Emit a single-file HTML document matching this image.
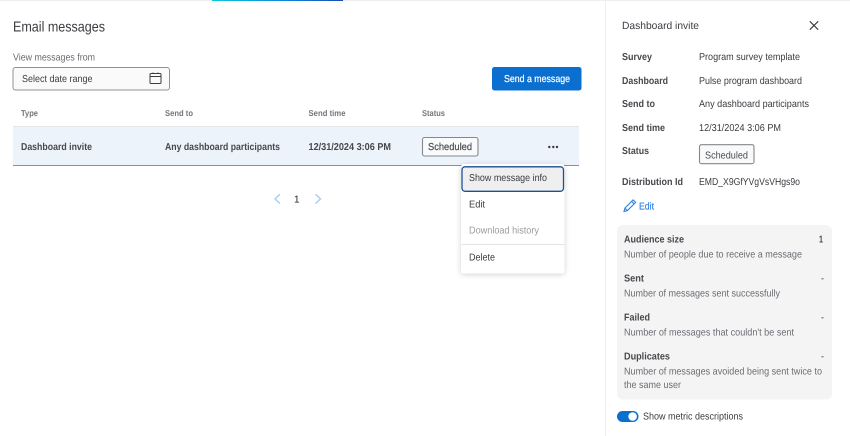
<!DOCTYPE html>
<html><head><meta charset="utf-8"><style>
html,body{margin:0;padding:0;background:#fff;width:850px;height:436px;overflow:hidden}
svg{display:block;filter:blur(.3px)}
text{font-family:"Liberation Sans",sans-serif;font-size:10px;fill:#3a3c40}
.b{font-weight:700;fill:#46484c}
.s{font-size:10px}
.d{fill:#6a6d73}
.h{fill:#74777c;font-weight:700;font-size:8.5px}
</style></head><body>
<svg width="850" height="436" viewBox="0 0 850 436" xmlns="http://www.w3.org/2000/svg" text-rendering="geometricPrecision">
<defs>
<linearGradient id="g" x1="0" x2="1" y1="0" y2="0"><stop offset="0" stop-color="#10c8d8"/><stop offset=".6" stop-color="#0b7fd8"/><stop offset="1" stop-color="#1a4bb0"/></linearGradient>
<filter id="sh" x="-20%" y="-20%" width="140%" height="140%"><feDropShadow dx="0" dy="1" stdDeviation="3" flood-color="#000" flood-opacity=".18"/></filter>
</defs>
<rect x="0" y="0" width="850" height="1" fill="#eceef0"/>
<rect x="212" y="0" width="131" height="1" fill="url(#g)"/>
<rect x="605" y="0" width="1" height="436" fill="#eeeeee"/>

<text x="13" y="31.5" style="font-size:14.5px" textLength="92" lengthAdjust="spacingAndGlyphs">Email messages</text>
<text x="13" y="60.5" class="s d" textLength="82" lengthAdjust="spacingAndGlyphs">View messages from</text>
<rect x="13" y="67.5" width="156.5" height="22.5" rx="2.5" fill="#fafafa" stroke="#8f9196"/>
<text x="22" y="81.8" class="s" textLength="70.5" lengthAdjust="spacingAndGlyphs">Select date range</text>
<g fill="none" stroke="#3a3c40" stroke-width="1"><rect x="150" y="73.5" width="11" height="10" rx="1"/><path d="M150 76.5h11M153 72.5v1M158 72.5v1"/></g>

<rect x="492" y="67" width="89.5" height="23.5" rx="2.5" fill="#0b6fd0"/>
<text x="504" y="81.8" class="s" style="fill:#fff" textLength="66" lengthAdjust="spacingAndGlyphs" stroke="#fff" stroke-width=".2">Send a message</text>

<text x="21" y="116" class="h" textLength="17" lengthAdjust="spacingAndGlyphs">Type</text>
<text x="165" y="116" class="h" textLength="28" lengthAdjust="spacingAndGlyphs">Send to</text>
<text x="308.5" y="116" class="h" textLength="37" lengthAdjust="spacingAndGlyphs">Send time</text>
<text x="422" y="116" class="h" textLength="23" lengthAdjust="spacingAndGlyphs">Status</text>

<rect x="13" y="127" width="566" height="38" fill="#edf3fb"/>
<rect x="13" y="126" width="566" height="1" fill="#e4e6e8"/>
<rect x="13" y="165" width="566" height="1" fill="#5d9bdc"/>
<text x="21" y="149.8" class="b s" textLength="71" lengthAdjust="spacingAndGlyphs">Dashboard invite</text>
<text x="165" y="149.8" class="b s" textLength="115" lengthAdjust="spacingAndGlyphs">Any dashboard participants</text>
<text x="308.5" y="149.8" class="b s" textLength="82.5" lengthAdjust="spacingAndGlyphs">12/31/2024 3:06 PM</text>
<rect x="422.5" y="137.5" width="55.5" height="18.5" rx="2" fill="#f9fafb" stroke="#85878c" stroke-width="1.1"/>
<text x="428" y="149.8" class="s" style="fill:#4a4c50" stroke="#4a4c50" stroke-width=".2" textLength="44" lengthAdjust="spacingAndGlyphs">Scheduled</text>
<g fill="#3a3c40"><circle cx="549.3" cy="147" r="1.2"/><circle cx="553.3" cy="147" r="1.2"/><circle cx="557" cy="147" r="1.2"/></g>

<path d="M280 194.2l-5 4.7 5 4.7M315.5 194.2l5 4.7-5 4.7" fill="none" stroke="#a9cbf0" stroke-width="1.4"/>
<text x="294" y="202.5" class="s" style="fill:#222" textLength="5.5" lengthAdjust="spacingAndGlyphs">1</text>

<rect x="461" y="164" width="103.5" height="109.5" rx="3" fill="#fff" filter="url(#sh)"/>
<rect x="462" y="166.8" width="101.5" height="24.5" rx="3" fill="#efefef" stroke="#1d4f91" stroke-width="1.3"/>
<text x="469" y="181" class="s" textLength="78" lengthAdjust="spacingAndGlyphs">Show message info</text>
<text x="469" y="207.3" class="s" textLength="16" lengthAdjust="spacingAndGlyphs">Edit</text>
<text x="469" y="233.3" class="s" style="fill:#9a9ca0" textLength="70" lengthAdjust="spacingAndGlyphs">Download history</text>
<rect x="461" y="244" width="103.5" height="1" fill="#e3e3e3"/>
<text x="469" y="260.3" class="s" textLength="26" lengthAdjust="spacingAndGlyphs">Delete</text>

<text x="622" y="29" style="font-size:10.5px" textLength="77" lengthAdjust="spacingAndGlyphs">Dashboard invite</text>
<path d="M809.8 21.3l8.4 8.4M818.2 21.3l-8.4 8.4" stroke="#3a3c40" stroke-width="1.1" fill="none"/>

<text x="622" y="60" class="b s" textLength="30" lengthAdjust="spacingAndGlyphs">Survey</text>
<text x="699" y="60" class="s" textLength="101" lengthAdjust="spacingAndGlyphs">Program survey template</text>
<text x="622" y="84" class="b s" textLength="46" lengthAdjust="spacingAndGlyphs">Dashboard</text>
<text x="699" y="84" class="s" textLength="103" lengthAdjust="spacingAndGlyphs">Pulse program dashboard</text>
<text x="622" y="107" class="b s" textLength="33" lengthAdjust="spacingAndGlyphs">Send to</text>
<text x="699" y="107" class="s" textLength="110" lengthAdjust="spacingAndGlyphs">Any dashboard participants</text>
<text x="622" y="131" class="b s" textLength="43" lengthAdjust="spacingAndGlyphs">Send time</text>
<text x="699" y="131" class="s" textLength="82" lengthAdjust="spacingAndGlyphs">12/31/2024 3:06 PM</text>
<text x="622" y="154" class="b s" textLength="27" lengthAdjust="spacingAndGlyphs">Status</text>
<rect x="699.5" y="144.7" width="54.5" height="19" rx="2" fill="#f9fafb" stroke="#85878c" stroke-width="1.1"/>
<text x="705" y="158.3" class="s" style="fill:#4a4c50" textLength="43" lengthAdjust="spacingAndGlyphs">Scheduled</text>
<text x="622" y="185" class="b s" textLength="61" lengthAdjust="spacingAndGlyphs">Distribution Id</text>
<text x="699" y="185" class="s" textLength="101" lengthAdjust="spacingAndGlyphs">EMD_X9GfYVgVsVHgs9o</text>

<g fill="none" stroke="#2f7fdf" stroke-width="1.1"><path d="M624 211.5l.9-3.4 8.2-8.2 2.5 2.5-8.2 8.2zM624.9 208.1l2.5 2.5M631.6 201.4l2.5 2.5"/></g>
<text x="639" y="209.7" class="s" style="fill:#2f7fdf" stroke="#2f7fdf" stroke-width=".15" textLength="15" lengthAdjust="spacingAndGlyphs">Edit</text>

<rect x="617" y="225" width="215" height="174.5" rx="6" fill="#f4f4f4"/>
<text x="624" y="242.5" class="b s" textLength="60" lengthAdjust="spacingAndGlyphs">Audience size</text>
<text x="819" y="242.5" class="s b" textLength="4" lengthAdjust="spacingAndGlyphs">1</text>
<text x="624" y="257.7" class="s d" textLength="178" lengthAdjust="spacingAndGlyphs">Number of people due to receive a message</text>
<text x="624" y="281.5" class="b s" textLength="20" lengthAdjust="spacingAndGlyphs">Sent</text>
<text x="821" y="281.5" class="s" textLength="3" lengthAdjust="spacingAndGlyphs">-</text>
<text x="624" y="296.7" class="s d" textLength="156" lengthAdjust="spacingAndGlyphs">Number of messages sent successfully</text>
<text x="624" y="320.5" class="b s" textLength="26" lengthAdjust="spacingAndGlyphs">Failed</text>
<text x="821" y="320.5" class="s" textLength="3" lengthAdjust="spacingAndGlyphs">-</text>
<text x="624" y="335.7" class="s d" textLength="170" lengthAdjust="spacingAndGlyphs">Number of messages that couldn't be sent</text>
<text x="624" y="359.5" class="b s" textLength="46" lengthAdjust="spacingAndGlyphs">Duplicates</text>
<text x="821" y="359.5" class="s" textLength="3" lengthAdjust="spacingAndGlyphs">-</text>
<text x="624" y="374.7" class="s d" textLength="198" lengthAdjust="spacingAndGlyphs">Number of messages avoided being sent twice to</text>
<text x="624" y="388" class="s d" textLength="57" lengthAdjust="spacingAndGlyphs">the same user</text>

<rect x="617" y="411" width="21.5" height="11" rx="5.5" fill="#0b6fd0"/>
<circle cx="632.6" cy="416.5" r="4.3" fill="#fff"/>
<text x="643" y="419.7" class="s" textLength="100" lengthAdjust="spacingAndGlyphs">Show metric descriptions</text>
</svg>
</body></html>
